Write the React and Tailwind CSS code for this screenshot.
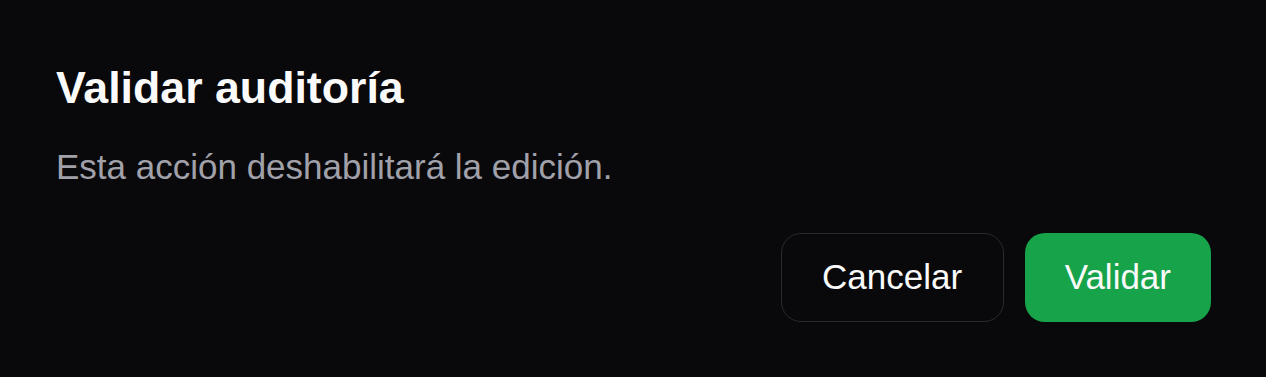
export default function App() {
  return (
    <div
      className="w-[1266px] h-[377px] bg-[#09090b] px-[55px] pt-[65px] flex flex-col"
      style={{ fontFamily: '"Liberation Sans", Arial, sans-serif' }}
    >
      <h2 className="text-[44.7px] leading-[45px] font-bold text-[#fafafa] pl-[1px]">
        Validar auditoría
      </h2>
      <p className="mt-[32px] text-[35px] leading-[50px] text-[#a1a1aa] pl-[1px]">
        Esta acción deshabilitará la edición.
      </p>
      <div className="mt-[41px] flex justify-end gap-[21px]">
        <button className="h-[89px] px-[40.5px] rounded-[20px] border border-[#2a2a2e] bg-[#09090b] text-[35px] text-[#fafafa] flex items-center">
          Cancelar
        </button>
        <button className="h-[89px] px-[40px] rounded-[20px] bg-[#16a34a] text-[35px] text-[#fafafa] flex items-center">
          Validar
        </button>
      </div>
    </div>
  );
}
